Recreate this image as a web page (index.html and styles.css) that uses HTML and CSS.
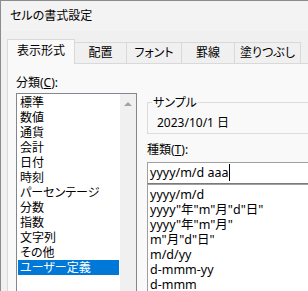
FILE: index.html
```html
<!DOCTYPE html>
<html lang="ja">
<head>
    <meta charset="UTF-8">
    <meta name="viewport" content="width=device-width, initial-scale=1.0">
    <title>セルの書式設定</title>
    <link rel="stylesheet" href="styles.css">
</head>
<body>
    <div class="window">
        <div class="titlebar">セルの書式設定</div>

        <div class="tab-strip">
            <div class="tab tab-number active">表示形式</div>
            <div class="tab tab-align">配置</div>
            <div class="tab tab-font">フォント</div>
            <div class="tab tab-border">罫線</div>
            <div class="tab tab-fill">塗りつぶし</div>
            <div class="tab-rest"></div>
        </div>

        <div class="panel">
            <div class="category">
                <div class="label">分類(<u>C</u>):</div>
                <div class="listbox">
                    <ul class="category-list">
                        <li>標準</li>
                        <li>数値</li>
                        <li>通貨</li>
                        <li>会計</li>
                        <li>日付</li>
                        <li>時刻</li>
                        <li>パーセンテージ</li>
                        <li>分数</li>
                        <li>指数</li>
                        <li>文字列</li>
                        <li>その他</li>
                        <li class="selected">ユーザー定義</li>
                    </ul>
                    <div class="scrollbar">
                        <span class="arrow-up"></span>
                    </div>
                </div>
            </div>

            <div class="format">
                <fieldset class="sample">
                    <legend>サンプル</legend>
                    <div class="sample-value">2023/10/1 日</div>
                </fieldset>

                <div class="label type-label">種類(<u>T</u>):</div>
                <div class="type-input"><span class="caret">yyyy/m/d aaa</span></div>
                <ul class="type-list">
                    <li>yyyy/m/d</li>
                    <li>yyyy"年"m"月"d"日"</li>
                    <li>yyyy"年"m"月"</li>
                    <li>m"月"d"日"</li>
                    <li>m/d/yy</li>
                    <li>d-mmm-yy</li>
                    <li>d-mmm</li>
                </ul>
            </div>
        </div>
    </div>
</body>
</html>
```

FILE: styles.css
```css
body {
    margin: 0;
    font-family: "Noto Sans", "Noto Sans CJK JP", sans-serif;
    font-size: 12px;
    font-feature-settings: "palt";
    color: #000;
    background-color: #f0f0f0;
}

ul {
    list-style: none;
    margin: 0;
    padding: 0;
}

.window {
    width: 307px;
    height: 290px;
    border-top: 1px solid #8c8c8c;
    border-left: 1px solid #8c8c8c;
    background-color: #f0f0f0;
    overflow: hidden;
    display: flex;
    flex-direction: column;
}

.titlebar {
    height: 30px;
    line-height: 30px;
    padding-left: 9px;
    background-color: #f3f3f3;
}

/* tabs */
.tab-strip {
    display: flex;
    align-items: flex-end;
    height: 25px;
    padding-top: 8px;
    padding-left: 6px;
}

.tab {
    box-sizing: border-box;
    height: 22px;
    line-height: 20px;
    text-align: center;
    border-top: 1px solid #d9d9d9;
    border-right: 1px solid #d9d9d9;
    border-bottom: 1px solid #d9d9d9;
}

.tab.active {
    height: 25px;
    line-height: 22px;
    border-left: 1px solid #d9d9d9;
    border-bottom: none;
    background-color: #f9f9f9;
}

.tab-number { width: 68px; }
.tab-align { width: 52px; }
.tab-font { width: 55px; }
.tab-border { width: 53px; }
.tab-fill { width: 66px; }

.tab-rest {
    flex: 1;
    border-bottom: 1px solid #d9d9d9;
}

/* panel */
.panel {
    flex: 1;
    display: flex;
    margin-left: 6px;
    padding: 11px 0 0 8px;
    border-left: 1px solid #d9d9d9;
    background-color: #f9f9f9;
}

.label {
    line-height: 15px;
}

.category {
    width: 121px;
    flex-shrink: 0;
}

.listbox {
    display: flex;
    height: 220px;
    margin-top: 3px;
    border: 1px solid #828790;
    background-color: #fff;
}

.category-list {
    flex: 1;
    padding: 1px;
}

.category-list li {
    line-height: 15px;
    padding-left: 2px;
    white-space: nowrap;
}

.category-list li.selected {
    background-color: #0078d7;
    color: #fff;
}

.scrollbar {
    width: 16px;
    background-color: #f0f0f0;
    display: flex;
    justify-content: center;
}

.arrow-up {
    width: 0;
    height: 0;
    margin-top: 8px;
    border-left: 4px solid transparent;
    border-right: 4px solid transparent;
    border-bottom: 4px solid #a3a3a3;
}

/* format side */
.format {
    width: 220px;
    flex-shrink: 0;
    margin-left: 10px;
}

.sample {
    margin: 20px 0 0;
    padding: 5px 9px 3px;
    border: 1px solid #dcdcdc;
}

.sample legend {
    margin-left: -5px;
    padding: 0 1px;
    line-height: 15px;
}

.sample-value {
    line-height: 15px;
}

.type-label {
    margin-top: 8px;
}

.type-input {
    margin-top: 5px;
    height: 20px;
    line-height: 20px;
    padding-left: 2px;
    font-size: 12.5px;
    border: 1px solid #a0a0a0;
    border-bottom-color: #7a7a7a;
    border-right: none;
    background-color: #fff;
}

.caret {
    border-right: 1px solid #000;
    padding-right: 1px;
}

.type-list {
    height: 120px;
    padding-top: 2px;
    font-size: 12.5px;
    border-top: 1px solid #a0a0a0;
    border-left: 1px solid #a0a0a0;
    background-color: #fff;
}

.type-list li {
    line-height: 15px;
    padding-left: 2px;
    white-space: nowrap;
}
```
